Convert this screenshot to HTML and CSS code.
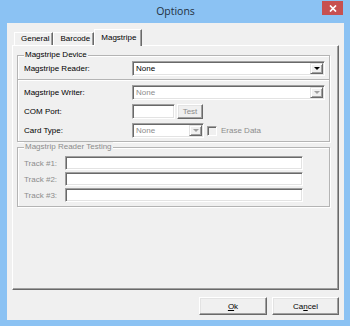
FILE: index.html
```html
<!DOCTYPE html>
<html lang="en">
<head>
    <meta charset="UTF-8">
    <meta name="viewport" content="width=device-width, initial-scale=1.0">
    <title>Options</title>
    <link rel="stylesheet" href="styles.css">
</head>
<body>
    <div class="window">
        <div class="titlebar">
            <span class="title">Options</span>
            <span class="close-btn">
                <svg width="8" height="7" viewBox="0 0 8 7"><path d="M1 0.5 L7 6.5 M7 0.5 L1 6.5" stroke="#fff" stroke-width="1.7"/></svg>
            </span>
        </div>

        <div class="client">
            <div class="tabs">
                <div class="tab">General</div>
                <div class="tab">Barcode</div>
                <div class="tab active">Magstripe</div>
            </div>

            <div class="tab-panel">
                <fieldset class="group">
                    <legend>Magstripe Device</legend>
                    <div class="row row-first">
                        <span class="field-label">Magstripe Reader:</span>
                        <div class="combo combo-wide">
                            <span class="combo-text">None</span>
                            <span class="combo-btn"><span class="arrow"></span></span>
                        </div>
                    </div>

                    <div class="separator"></div>

                    <div class="row">
                        <span class="field-label">Magstripe Writer:</span>
                        <div class="combo combo-wide disabled">
                            <span class="combo-text">None</span>
                            <span class="combo-btn"><span class="arrow"></span></span>
                        </div>
                    </div>

                    <div class="row">
                        <span class="field-label">COM Port:</span>
                        <div class="textbox textbox-port"></div>
                        <div class="btn btn-small disabled">Test</div>
                    </div>

                    <div class="row">
                        <span class="field-label">Card Type:</span>
                        <div class="combo combo-narrow disabled">
                            <span class="combo-text">None</span>
                            <span class="combo-btn"><span class="arrow"></span></span>
                        </div>
                        <span class="checkbox"></span>
                        <span class="check-label">Erase Data</span>
                    </div>
                </fieldset>

                <fieldset class="group group-disabled">
                    <legend>Magstrip Reader Testing</legend>
                    <div class="track-row">
                        <span class="track-label">Track #1:</span>
                        <div class="textbox textbox-track"></div>
                    </div>
                    <div class="track-row">
                        <span class="track-label">Track #2:</span>
                        <div class="textbox textbox-track"></div>
                    </div>
                    <div class="track-row">
                        <span class="track-label">Track #3:</span>
                        <div class="textbox textbox-track"></div>
                    </div>
                </fieldset>
            </div>

            <div class="dialog-buttons">
                <div class="btn btn-dialog"><u>O</u>k</div>
                <div class="btn btn-dialog">Ca<u>n</u>cel</div>
            </div>
        </div>
    </div>
</body>
</html>
```

FILE: styles.css
```css
body {
    margin: 0;
    padding: 0;
    width: 350px;
    height: 326px;
    overflow: hidden;
    font-family: "Liberation Sans", Arial, sans-serif;
    font-size: 8px;
    color: #000;
}

.window {
    height: 326px;
    box-sizing: border-box;
    padding: 0 6px 6px 7px;
    background-color: #8bc2f3;
    display: flex;
    flex-direction: column;
}

/* title bar */
.titlebar {
    height: 23px;
    flex: none;
    display: flex;
    align-items: flex-start;
}

.title {
    flex: 1;
    padding-left: 22px;
    text-align: center;
    font-family: "Open Sans", "Noto Sans", sans-serif;
    font-size: 10.5px;
    line-height: 23px;
    color: #24313f;
}

.close-btn {
    width: 21px;
    height: 14px;
    margin: 1px 1px 0 0;
    background-color: #c75050;
    display: flex;
    align-items: center;
    justify-content: center;
}

/* client area */
.client {
    flex: 1;
    background-color: #f0f0f0;
    padding: 6px 5px 5px 5px;
    display: flex;
    flex-direction: column;
}

.tabs {
    height: 16px;
    padding-left: 2px;
    display: flex;
    align-items: flex-end;
    position: relative;
    z-index: 1;
}

.tab {
    height: 13px;
    box-sizing: border-box;
    padding: 0 3px 0 6px;
    line-height: 12px;
    border-top: 1px solid #fff;
    border-left: 1px solid #fff;
    border-right: 1px solid #696969;
    box-shadow: inset -1px 0 #a0a0a0;
    background-color: #f0f0f0;
}

.tab.active {
    height: 17px;
    margin-bottom: -1px;
    padding: 2px 5px 0 6px;
}

.tab-panel {
    height: 245px;
    flex: none;
    box-sizing: border-box;
    padding: 4px 8px 0 4px;
    border-top: 1px solid #fff;
    border-left: 1px solid #fff;
    border-right: 1px solid #696969;
    border-bottom: 1px solid #696969;
    box-shadow: inset -1px -1px #a0a0a0;
}

/* group boxes */
.group {
    margin: 0;
    padding: 0 4px 3px 6px;
    min-width: 0;
    border: 1px solid #b4b4b4;
    box-shadow: inset 1px 1px #fff, 1px 1px #fff;
}

.group legend {
    padding: 0 1px;
    line-height: 10px;
    background-color: #f0f0f0;
}

.group-disabled {
    padding-bottom: 4px;
}

.group-disabled legend,
.group-disabled .track-label {
    color: #8c8c8c;
}

.row {
    height: 15px;
    margin-top: 4px;
    display: flex;
    align-items: center;
}

.row-first {
    margin-top: 1px;
}

.field-label {
    width: 108px;
    flex: none;
}

.separator {
    height: 1px;
    margin: 3px -4px 0 -6px;
    background-color: #b4b4b4;
    border-bottom: 1px solid #fff;
}

/* sunken controls */
.combo,
.textbox {
    height: 15px;
    box-sizing: border-box;
    background-color: #fff;
    border: 1px solid;
    border-color: #a0a0a0 #fff #fff #a0a0a0;
    box-shadow: inset 1px 1px #696969, inset -1px -1px #e3e3e3;
}

.combo {
    display: flex;
    padding: 1px 1px 1px 1px;
}

.combo-wide {
    flex: 1;
}

.combo-narrow {
    width: 72px;
    flex: none;
}

.combo-text {
    flex: 1;
    padding-left: 2px;
    line-height: 11px;
}

.combo-btn {
    width: 13px;
    height: 11px;
    box-sizing: border-box;
    background-color: #f0f0f0;
    border: 1px solid;
    border-color: #e3e3e3 #696969 #696969 #e3e3e3;
    box-shadow: inset 1px 1px #fff, inset -1px -1px #a0a0a0;
    display: flex;
    align-items: center;
    justify-content: center;
}

.arrow {
    width: 0;
    height: 0;
    border-left: 3px solid transparent;
    border-right: 3px solid transparent;
    border-top: 3px solid #000;
}

.disabled .combo-text,
.btn.disabled {
    color: #8c8c8c;
}

.disabled .arrow {
    border-top-color: #a0a0a0;
}

.textbox-port {
    width: 43px;
}

.textbox-track {
    width: 238px;
    height: 14px;
}

/* buttons */
.btn {
    box-sizing: border-box;
    background-color: #f0f0f0;
    border: 1px solid;
    border-color: #fff #696969 #696969 #fff;
    box-shadow: inset -1px -1px #a0a0a0, inset 1px 1px #e3e3e3;
    display: flex;
    align-items: center;
    justify-content: center;
}

.btn-small {
    width: 26px;
    height: 15px;
    margin-left: 2px;
}

.checkbox {
    width: 10px;
    height: 10px;
    margin-left: 3px;
    box-sizing: border-box;
    background-color: #f0f0f0;
    border: 1px solid;
    border-color: #a0a0a0 #fff #fff #a0a0a0;
    box-shadow: inset 1px 1px #696969;
}

.check-label {
    margin-left: 4px;
    color: #8c8c8c;
}

.track-row {
    height: 14px;
    margin-top: 2px;
    display: flex;
    align-items: center;
}

.track-row:first-of-type {
    margin-top: 4px;
}

.track-label {
    width: 41px;
    flex: none;
}

.dialog-buttons {
    margin-top: 7px;
    display: flex;
    justify-content: flex-end;
    gap: 5px;
}

.btn-dialog {
    width: 68px;
    height: 18px;
}

.btn-dialog:last-child {
    width: 67px;
}
```
